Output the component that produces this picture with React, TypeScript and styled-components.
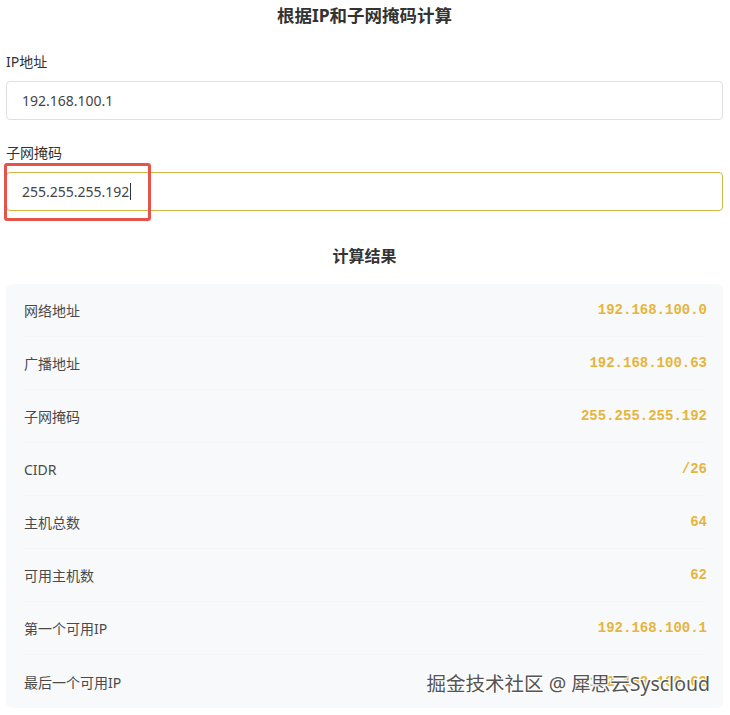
import React from "react";
import styled, { createGlobalStyle } from "styled-components";

const GlobalStyle = createGlobalStyle`
  body {
    margin: 0;
    background: #fff;
    font-family: "Noto Sans", "Noto Sans CJK SC", sans-serif;
  }
`;

const Page = styled.div`
  position: relative;
  width: 730px;
  height: 715px;
  padding: 0 7px 0 6px;
  box-sizing: border-box;
  overflow: hidden;
`;

const Title = styled.h1`
  margin: 0;
  padding-top: 3px;
  font-size: 17.5px;
  line-height: 24px;
  font-weight: 700;
  color: #333;
  text-align: center;
`;

const Field = styled.div<{ $top: number }>`
  position: relative;
  margin-top: ${(p) => p.$top}px;
`;

const Label = styled.div`
  font-size: 14px;
  line-height: 20px;
  color: #333;
  margin-bottom: 9px;
`;

const Input = styled.div<{ $focused?: boolean }>`
  height: 39px;
  box-sizing: border-box;
  border: 1px solid ${(p) => (p.$focused ? "#d9b447" : "#dcdfe3")};
  border-radius: 4px;
  padding: 0 15px;
  display: flex;
  align-items: center;
  font-size: 14px;
  color: #444;
`;

const Caret = styled.span`
  display: inline-block;
  width: 1px;
  height: 17px;
  background: #333;
  margin-left: 1px;
`;

const Highlight = styled.div`
  position: absolute;
  left: -2px;
  top: 20px;
  width: 147px;
  height: 58px;
  border: 3px solid #e5534b;
  border-radius: 3px;
  box-sizing: border-box;
`;

const SectionTitle = styled.h2`
  margin: 34px 0 0;
  font-size: 16px;
  line-height: 22px;
  font-weight: 700;
  color: #333;
  text-align: center;
`;

const Panel = styled.div`
  margin-top: 17px;
  background: #f8f9fa;
  border-radius: 6px;
  padding: 0 16px 0 18px;
`;

const Row = styled.div`
  height: 53px;
  display: flex;
  align-items: center;
  justify-content: space-between;
  border-bottom: 1px solid #f5f6f7;
  box-sizing: border-box;

  &:last-child {
    border-bottom: none;
  }
`;

const RowLabel = styled.span`
  font-size: 14px;
  color: #4a4a4a;
`;

const RowValue = styled.span`
  font-family: "Liberation Mono", "DejaVu Sans Mono", monospace;
  font-weight: 700;
  font-size: 14px;
  color: #e5b53d;
`;

const Watermark = styled.div`
  position: absolute;
  right: 20px;
  top: 671px;
  font-size: 19.5px;
  line-height: 26px;
  color: #555;
  text-shadow: 1px 1px 0 #fff, -1px -1px 0 #fff, 1px -1px 0 #fff, -1px 1px 0 #fff;
  white-space: nowrap;
`;

const results = [
  { label: "网络地址", value: "192.168.100.0" },
  { label: "广播地址", value: "192.168.100.63" },
  { label: "子网掩码", value: "255.255.255.192" },
  { label: "CIDR", value: "/26" },
  { label: "主机总数", value: "64" },
  { label: "可用主机数", value: "62" },
  { label: "第一个可用IP", value: "192.168.100.1" },
  { label: "最后一个可用IP", value: "192.168.100.62" },
];

function App() {
  return (
    <Page>
      <GlobalStyle />
      <Title>根据IP和子网掩码计算</Title>
      <Field $top={25}>
        <Label>IP地址</Label>
        <Input>192.168.100.1</Input>
      </Field>
      <Field $top={23}>
        <Label>子网掩码</Label>
        <Input $focused>
          255.255.255.192
          <Caret />
        </Input>
        <Highlight />
      </Field>
      <SectionTitle>计算结果</SectionTitle>
      <Panel>
        {results.map((r) => (
          <Row key={r.label}>
            <RowLabel>{r.label}</RowLabel>
            <RowValue>{r.value}</RowValue>
          </Row>
        ))}
      </Panel>
      <Watermark>掘金技术社区 @ 犀思云Syscloud</Watermark>
    </Page>
  );
}

export default App;
